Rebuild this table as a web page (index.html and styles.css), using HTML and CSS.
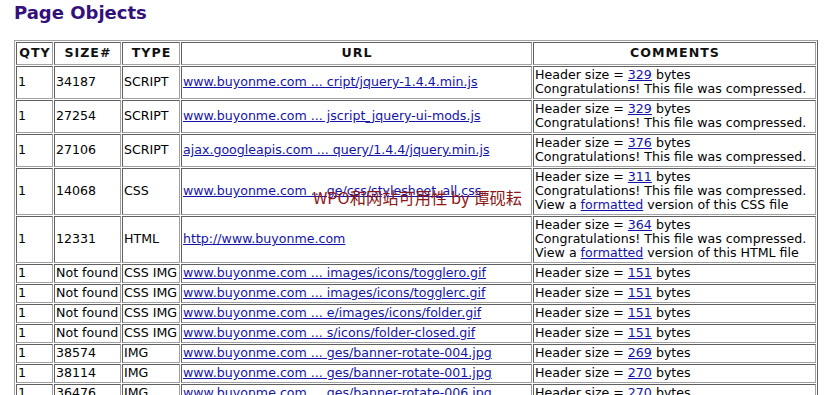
FILE: index.html
```html
<!DOCTYPE html>
<html>
<head>
<meta charset="utf-8">
<title>Page Objects</title>
<link rel="stylesheet" href="styles.css">
</head>
<body>
<div class="page">
  <h2 class="title">Page Objects</h2>
  <table class="objects">
    <thead>
      <tr>
        <th class="c-qty">QTY</th>
        <th class="c-size">SIZE#</th>
        <th class="c-type">TYPE</th>
        <th class="c-url">URL</th>
        <th class="c-com">COMMENTS</th>
      </tr>
    </thead>
    <tbody>
      <tr>
        <td>1</td><td>34187</td><td>SCRIPT</td>
        <td><a href="#">www.buyonme.com ... cript/jquery-1.4.4.min.js</a></td>
        <td class="com">Header size = <a href="#">329</a> bytes<br>Congratulations! This file was compressed.</td>
      </tr>
      <tr>
        <td>1</td><td>27254</td><td>SCRIPT</td>
        <td><a href="#">www.buyonme.com ... jscript_jquery-ui-mods.js</a></td>
        <td class="com">Header size = <a href="#">329</a> bytes<br>Congratulations! This file was compressed.</td>
      </tr>
      <tr>
        <td>1</td><td>27106</td><td>SCRIPT</td>
        <td><a href="#">ajax.googleapis.com ... query/1.4.4/jquery.min.js</a></td>
        <td class="com">Header size = <a href="#">376</a> bytes<br>Congratulations! This file was compressed.</td>
      </tr>
      <tr>
        <td>1</td><td>14068</td><td>CSS</td>
        <td><a href="#">www.buyonme.com ... ge/css/stylesheet_all.css</a></td>
        <td class="com">Header size = <a href="#">311</a> bytes<br>Congratulations! This file was compressed.<br>View a <a href="#">formatted</a> version of this CSS file</td>
      </tr>
      <tr>
        <td>1</td><td>12331</td><td>HTML</td>
        <td><a href="#">http://www.buyonme.com</a></td>
        <td class="com">Header size = <a href="#">364</a> bytes<br>Congratulations! This file was compressed.<br>View a <a href="#">formatted</a> version of this HTML file</td>
      </tr>
      <tr>
        <td>1</td><td>Not found</td><td>CSS IMG</td>
        <td><a href="#">www.buyonme.com ... images/icons/togglero.gif</a></td>
        <td class="com">Header size = <a href="#">151</a> bytes</td>
      </tr>
      <tr>
        <td>1</td><td>Not found</td><td>CSS IMG</td>
        <td><a href="#">www.buyonme.com ... images/icons/togglerc.gif</a></td>
        <td class="com">Header size = <a href="#">151</a> bytes</td>
      </tr>
      <tr>
        <td>1</td><td>Not found</td><td>CSS IMG</td>
        <td><a href="#">www.buyonme.com ... e/images/icons/folder.gif</a></td>
        <td class="com">Header size = <a href="#">151</a> bytes</td>
      </tr>
      <tr>
        <td>1</td><td>Not found</td><td>CSS IMG</td>
        <td><a href="#">www.buyonme.com ... s/icons/folder-closed.gif</a></td>
        <td class="com">Header size = <a href="#">151</a> bytes</td>
      </tr>
      <tr>
        <td>1</td><td>38574</td><td>IMG</td>
        <td><a href="#">www.buyonme.com ... ges/banner-rotate-004.jpg</a></td>
        <td class="com">Header size = <a href="#">269</a> bytes</td>
      </tr>
      <tr>
        <td>1</td><td>38114</td><td>IMG</td>
        <td><a href="#">www.buyonme.com ... ges/banner-rotate-001.jpg</a></td>
        <td class="com">Header size = <a href="#">270</a> bytes</td>
      </tr>
      <tr>
        <td>1</td><td>36476</td><td>IMG</td>
        <td><a href="#">www.buyonme.com ... ges/banner-rotate-006.jpg</a></td>
        <td class="com">Header size = <a href="#">270</a> bytes</td>
      </tr>
    </tbody>
  </table>
  <div class="watermark">WPO和网站可用性 by 谭砚耘</div>
</div>
</body>
</html>
```
FILE: styles.css
```css
html, body {
  margin: 0;
  padding: 0;
  background: #ffffff;
  overflow: hidden;
}

.page {
  position: relative;
  padding: 0 0 0 14px;
  font-family: "DejaVu Sans", Verdana, sans-serif;
  font-size: 12.6px;
  color: #000;
}

.title {
  margin: 2px 0 16px 0;
  font-family: "DejaVu Sans", Verdana, sans-serif;
  font-size: 18px;
  line-height: 22px;
  font-weight: bold;
  color: #33117a;
}

.objects {
  border-collapse: separate;
  border-spacing: 1px;
  border: 1px solid;
  border-color: #a0a0a0 #606060 #606060 #a0a0a0;
  table-layout: fixed;
  width: 804px;
}

.objects th,
.objects td {
  border: 1px solid;
  border-color: #606060 #a0a0a0 #a0a0a0 #606060;
  padding: 1px 1px 2px 1px;
  line-height: 14px;
  white-space: nowrap;
  vertical-align: middle;
  text-align: left;
  overflow: hidden;
}

.objects th {
  text-align: center;
  font-weight: bold;
  font-size: 12.6px;
  letter-spacing: 1px;
  padding: 3px 0 4px 1px;
  color: #111;
}

.c-qty { width: 34px; }
.c-size { width: 64px; }
.c-type { width: 55px; }
.c-url { width: 348px; }
.c-com { width: 280px; }

.objects a {
  color: #1414a8;
  text-decoration: underline;
}

.objects td.com {
  vertical-align: top;
}

.watermark {
  position: absolute;
  left: 313px;
  top: 187px;
  font-family: "Noto Sans CJK SC", "DejaVu Sans", sans-serif;
  font-size: 16.3px;
  line-height: 16px;
  color: #8e1616;
  white-space: nowrap;
}
```
